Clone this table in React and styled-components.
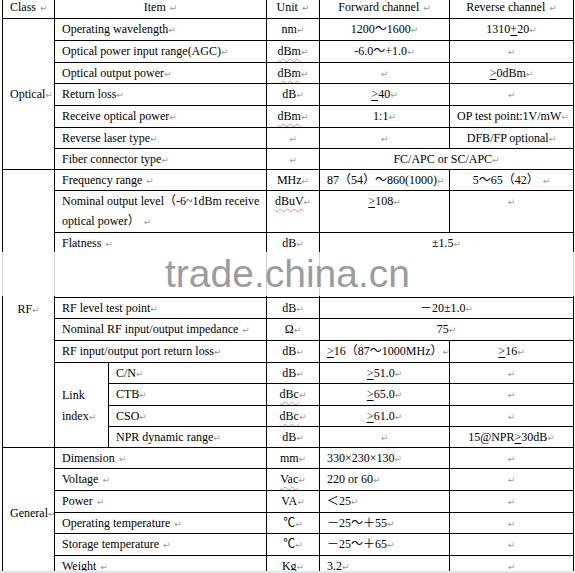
import React from 'react'
import styled, {createGlobalStyle} from 'styled-components'

const GlobalStyle = createGlobalStyle`
  html, body {
    margin: 0;
    padding: 0;
    background: #e4e4e4;
  }
`

const Page = styled.div`
  position: relative;
  width: 575px;
  height: 571px;
  overflow: hidden;
  background: #fff;
`

const Table = styled.table`
  border-collapse: collapse;
  table-layout: fixed;
  width: 572px;
  margin: -4px 0 0 2px;
  font-family: "Liberation Serif", "Noto Sans CJK SC", serif;
  font-size: 12px;
  line-height: 20px;
  color: #000;
`

const Col = styled.col`
  width: ${p => p.$w}px;
`

const Row = styled.tr`
  height: ${p => p.$h}px;
`

const Cell = styled.td`
  border: 1px solid #000;
  padding: 0 7px;
  text-align: ${p => p.$align || 'center'};
  vertical-align: ${p => (p.$mid ? 'middle' : 'top')};
  white-space: nowrap;
  overflow: hidden;
`

const Wrap = styled.div`
  padding-top: 1px;
  line-height: ${p => (p.$lh ? `${p.$lh}px` : 'inherit')};
`

const Mark = styled.span`
  font-family: "DejaVu Sans", sans-serif;
  font-size: 9px;
  line-height: 0;
  color: #9a9a9a;
  margin-left: ${p => (p.$gap ? 4 : 0)}px;
`

const Wavy = styled.span`
  text-decoration: underline wavy rgba(200, 60, 60, 0.55);
  text-decoration-thickness: 1px;
  text-underline-offset: 3px;
`

const Under = styled.span`
  text-decoration: underline;
  text-underline-offset: 2px;
`

const Band = styled.div`
  position: absolute;
  left: 0;
  right: 0;
  top: 252px;
  height: 44px;
  background: rgba(255, 255, 255, 0.82);
  font-family: "Liberation Sans", sans-serif;
  font-size: 39px;
  line-height: 44px;
  color: #9c9c9c;
  padding-left: 165px;
  pointer-events: none;
`

const R = ({gap}) => <Mark $gap={gap}>↵</Mark>
const Ge = () => <Under>&gt;</Under>

function Item({children, gap, span = 2}) {
  return (
    <Cell colSpan={span} $align="left">
      {children}
      <R gap={gap} />
    </Cell>
  )
}

function V({children, gap, align, span}) {
  return (
    <Cell colSpan={span} $align={align}>
      {children}
      <R gap={gap} />
    </Cell>
  )
}

export default function App() {
  return (
    <Page>
      <GlobalStyle />
      <Table>
        <colgroup>
          <Col $w={52} />
          <Col $w={54} />
          <Col $w={158} />
          <Col $w={53} />
          <Col $w={130} />
          <Col $w={124} />
        </colgroup>
        <tbody>
          <Row $h={22}>
            <V gap>Class</V>
            <V span={2} gap>Item</V>
            <V gap>Unit</V>
            <V gap>Forward channel</V>
            <V gap>Reverse channel</V>
          </Row>

          <Row $h={22}>
            <Cell rowSpan={7} $mid>Optical<R /></Cell>
            <Item>Operating wavelength</Item>
            <V>nm</V>
            <V>1200～1600</V>
            <V>1310<Under>+</Under>20</V>
          </Row>
          <Row $h={22}>
            <Item>Optical power input range(AGC)</Item>
            <V><Wavy>dBm</Wavy></V>
            <V>-6.0～+1.0</V>
            <V />
          </Row>
          <Row $h={21}>
            <Item>Optical output power</Item>
            <V><Wavy>dBm</Wavy></V>
            <V />
            <V><Ge />0dBm</V>
          </Row>
          <Row $h={22}>
            <Item>Return loss</Item>
            <V>dB</V>
            <V><Ge />40</V>
            <V />
          </Row>
          <Row $h={22}>
            <Item>Receive optical power</Item>
            <V><Wavy>dBm</Wavy></V>
            <V>1:1</V>
            <V>OP test point:1V/mW</V>
          </Row>
          <Row $h={21}>
            <Item>Reverse laser type</Item>
            <V />
            <V />
            <V>DFB/FP optional</V>
          </Row>
          <Row $h={21}>
            <Item>Fiber connector type</Item>
            <V />
            <V span={2}>FC/APC or SC/APC</V>
          </Row>

          <Row $h={21}>
            <Cell rowSpan={10} $mid>RF<R /></Cell>
            <Item gap>Frequency range</Item>
            <V>MHz</V>
            <V>87（54）～860(1000)</V>
            <V gap>5～65（42）</V>
          </Row>
          <Row $h={42}>
            <Item gap>Nominal output level（-6~1dBm receive<br />optical power）</Item>
            <V><Wavy>dBuV</Wavy></V>
            <V><Ge />108</V>
            <V />
          </Row>
          <Row $h={65}>
            <Item gap>Flatness</Item>
            <V>dB</V>
            <V span={2}>±1.5</V>
          </Row>
          <Row $h={21}>
            <Item>RF level test point</Item>
            <V>dB</V>
            <V span={2}>－20±1.0</V>
          </Row>
          <Row $h={22}>
            <Item gap>Nominal RF input/output impedance</Item>
            <V>Ω</V>
            <V span={2}>75</V>
          </Row>
          <Row $h={22}>
            <Item>RF input/output port return loss</Item>
            <V>dB</V>
            <V><Ge />16（87～1000MHz）</V>
            <V><Ge />16</V>
          </Row>
          <Row $h={21}>
            <Cell rowSpan={4} $mid $align="left"><Wrap $lh={21}>Link<br />index<R /></Wrap></Cell>
            <Item span={1}>C/N</Item>
            <V>dB</V>
            <V><Ge />51.0</V>
            <V />
          </Row>
          <Row $h={22}>
            <Item span={1}>CTB</Item>
            <V><Wavy>dBc</Wavy></V>
            <V><Ge />65.0</V>
            <V />
          </Row>
          <Row $h={21}>
            <Item span={1}>CSO</Item>
            <V><Wavy>dBc</Wavy></V>
            <V><Ge />61.0</V>
            <V />
          </Row>
          <Row $h={21}>
            <Item span={1}>NPR dynamic range</Item>
            <V>dB</V>
            <V />
            <V>15@NPR<Ge />30dB</V>
          </Row>

          <Row $h={21}>
            <Cell rowSpan={6} $mid>General<R /></Cell>
            <Item gap>Dimension</Item>
            <V>mm</V>
            <V align="left">330×230×130</V>
            <V />
          </Row>
          <Row $h={22}>
            <Item gap>Voltage</Item>
            <V><Wavy>Vac</Wavy></V>
            <V align="left">220 or 60</V>
            <V />
          </Row>
          <Row $h={22}>
            <Item gap>Power</Item>
            <V>VA</V>
            <V align="left">＜25</V>
            <V />
          </Row>
          <Row $h={21}>
            <Item gap>Operating temperature</Item>
            <V>℃</V>
            <V align="left">－25～＋55</V>
            <V />
          </Row>
          <Row $h={22}>
            <Item gap>Storage temperature</Item>
            <V>℃</V>
            <V align="left">－25～＋65</V>
            <V />
          </Row>
          <Row $h={22}>
            <Item gap>Weight</Item>
            <V>Kg</V>
            <V align="left">3.2</V>
            <V />
          </Row>
        </tbody>
      </Table>
      <Band>trade.china.cn</Band>
    </Page>
  )
}
